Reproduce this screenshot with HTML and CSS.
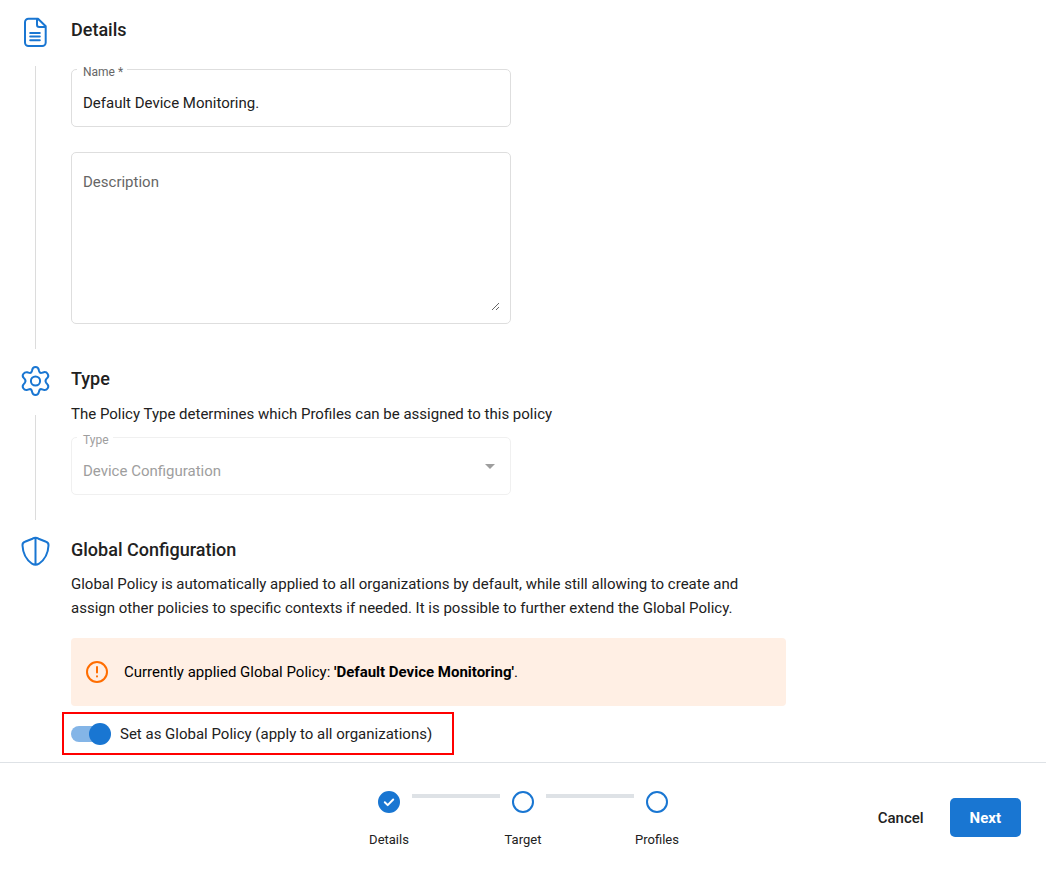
FILE: index.html
```html
<!DOCTYPE html>
<html lang="en">
<head>
<meta charset="utf-8">
<meta name="viewport" content="width=device-width, initial-scale=1">
<title>Policy details</title>
<link rel="stylesheet" href="styles.css">
</head>
<body>
<form class="page">
  <main class="content">
    <section class="section">
      <div class="rail">
        <svg class="rail-icon" viewBox="-0.5 0 36 36" aria-hidden="true">
          <path d="M11 4.700h9.500l7.700 7.600v16.200a3.500 3.500 0 0 1-3.500 3.500H11a3.500 3.500 0 0 1-3.500-3.500V8.200a3.500 3.500 0 0 1 3.500-3.500zM19.500 4.900v5.900a2.300 2.300 0 0 0 2.300 2.300h6.300M12.700 19h9.600M12.700 22.600h9.600M12.700 26.200h9.600"/>
        </svg>
        <span class="rail-line"></span>
      </div>
      <div class="section-body">
        <h2 class="title">Details</h2>
        <div class="field field-first">
          <label class="field-label" for="name">Name *</label>
          <input class="field-control" id="name" type="text" value="Default Device Monitoring." required>
        </div>
        <div class="field field-area">
          <textarea class="field-textarea" id="description" aria-label="Description" placeholder="Description"></textarea>
        </div>
      </div>
    </section>

    <section class="section">
      <div class="rail">
        <svg class="rail-icon" viewBox="-0.5 0 36 36" aria-hidden="true">
          <path d="M14.600 7.200Q15.200 4 18 4T21.400 7.200L21.800 8.700Q22.400 10.300 24.100 9.900L26.400 9.200Q28.800 8.700 30.200 11T29.800 14.900L28.700 16.200Q27.300 18 28.700 19.800L29.800 21.100Q31.600 23 30.200 25.200T26.400 26.900L24.100 26.200Q22.400 25.800 21.800 27.400L21.400 28.900Q20.800 32 18 32T14.600 28.900L14.200 27.400Q13.600 25.800 11.900 26.200L9.600 26.900Q7.200 27.400 5.800 25.200T6.200 21.100L7.300 19.800Q8.700 18 7.300 16.200L6.200 14.900Q4.400 13 5.800 11T9.600 9.200L11.900 9.900Q13.600 10.300 14.200 8.700Z"/>
          <circle cx="18" cy="18" r="4.600"/>
        </svg>
        <span class="rail-line"></span>
      </div>
      <div class="section-body">
        <h2 class="title">Type</h2>
        <p class="text">The Policy Type determines which Profiles can be assigned to this policy</p>
        <div class="field field-disabled">
          <label class="field-label" for="type">Type</label>
          <select class="field-control" id="type" disabled>
            <option>Device Configuration</option>
          </select>
          <svg class="field-arrow" viewBox="0 0 10 5" aria-hidden="true"><path d="M0 0h10L5 5z"/></svg>
        </div>
      </div>
    </section>

    <section class="section section-last">
      <div class="rail">
        <svg class="rail-icon" viewBox="-0.5 1 36 36" aria-hidden="true">
          <path d="M18 4.700Q19.500 4.700 21 5.700L28.600 8.800Q31.200 9.500 31 12.500C30.600 21 27.500 26.500 21.500 30.700Q18 33 14.500 30.700C8.500 26.500 5.400 21 5 12.500Q4.800 9.500 7.400 8.800L15 5.700Q16.500 4.700 18 4.700zM18 5v26.500"/>
        </svg>
      </div>
      <div class="section-body">
        <h2 class="title">Global Configuration</h2>
        <p class="text">Global Policy is automatically applied to all organizations by default, while still allowing to create and assign other policies to specific contexts if needed. It is possible to further extend the Global Policy.</p>
        <div class="alert" role="status">
          <svg class="alert-icon" viewBox="0 0 24 24" aria-hidden="true">
            <circle cx="12" cy="12" r="10"/>
            <path d="M12 7v5.500M12 16.200v.2"/>
          </svg>
          <span>Currently applied Global Policy: <strong>'Default Device Monitoring'</strong>.</span>
        </div>
        <label class="toggle">
          <input class="switch" type="checkbox" role="switch" checked>
          <span>Set as Global Policy (apply to all organizations)</span>
        </label>
      </div>
    </section>
  </main>

  <footer class="footer">
    <ol class="stepper">
      <li class="step">
        <svg class="step-dot step-done" viewBox="0 0 24 24" aria-hidden="true"><circle cx="12" cy="12" r="10"/><path d="M7.800 12.300l2.900 2.800 5.500-5.600"/></svg>
        <span>Details</span>
      </li>
      <li class="step-bar" aria-hidden="true"></li>
      <li class="step">
        <svg class="step-dot" viewBox="0 0 24 24" aria-hidden="true"><circle cx="12" cy="12" r="10"/></svg>
        <span>Target</span>
      </li>
      <li class="step-bar" aria-hidden="true"></li>
      <li class="step">
        <svg class="step-dot" viewBox="0 0 24 24" aria-hidden="true"><circle cx="12" cy="12" r="10"/></svg>
        <span>Profiles</span>
      </li>
    </ol>
    <div class="actions">
      <button class="button" type="button">Cancel</button>
      <button class="button button-primary" type="button">Next</button>
    </div>
  </footer>
</form>
</body>
</html>
```
FILE: styles.css
```css
* {
  box-sizing: border-box;
}

body {
  margin: 0;
  background: #fff;
  color: #212121;
  font-family: Roboto, "Liberation Sans", sans-serif;
  font-size: 15px;
  line-height: 24px;
}

.page {
  display: flex;
  flex-direction: column;
  min-height: 100vh;
}

.content {
  flex: 1;
  padding: 14px 16px 7px 17px;
}

.section {
  display: flex;
  gap: 18px;
}

.rail {
  display: flex;
  flex: none;
  flex-direction: column;
  align-items: center;
  gap: 16px;
  width: 36px;
  padding-bottom: 14px;
}

.rail-icon {
  flex: none;
  width: 36px;
  height: 36px;
  fill: none;
  stroke: #1976d2;
  stroke-width: 2;
  stroke-linecap: round;
  stroke-linejoin: round;
}

.rail-line {
  flex: 1;
  width: 1px;
  background: #dcdcdc;
}

.section-body {
  flex: 1;
  min-width: 0;
  max-width: 715px;
  padding-bottom: 39px;
}

.section-last .section-body {
  padding-bottom: 0;
}

.title {
  margin: 0;
  font-size: 18px;
  font-weight: 500;
  line-height: 32px;
}

.text {
  max-width: 700px;
  margin: 7px 0 0;
}

.section-last .text {
  margin-top: 6px;
}

.field {
  position: relative;
  max-width: 440px;
  margin-top: 11px;
  border: 1px solid #dedede;
  border-radius: 5px;
}

.field-first {
  margin-top: 23px;
}

.field-label {
  position: absolute;
  top: -6px;
  left: 5px;
  padding: 0 4px 0 6px;
  background: #fff;
  color: #666;
  font-size: 12px;
  line-height: 16px;
}

.field-control {
  display: block;
  width: 100%;
  height: 56px;
  padding: 10px 11px 0;
  border: 0;
  border-radius: 5px;
  outline: 0;
  background: none;
  appearance: none;
  color: #212121;
  font: inherit;
}

.field-area {
  margin-top: 25px;
  padding: 17px 10px 12px 11px;
}

.field-textarea {
  display: block;
  width: 100%;
  height: 141px;
  padding: 0;
  border: 0;
  outline: 0;
  resize: vertical;
  color: #212121;
  font: inherit;
}

.field-textarea::placeholder {
  color: #666;
  opacity: 1;
}

.field-disabled {
  border-color: #f0f0f0;
}

.field-disabled .field-label,
.field-disabled .field-control {
  color: #9e9e9e;
  opacity: 1;
}

.field-arrow {
  position: absolute;
  top: 26px;
  right: 15px;
  width: 10px;
  height: 5px;
  fill: #9e9e9e;
}

.alert {
  display: flex;
  align-items: center;
  gap: 15px;
  min-height: 68px;
  margin-top: 18px;
  padding: 8px 14px;
  border-radius: 4px;
  background: #ffefe4;
  color: #000;
}

.alert-icon {
  flex: none;
  width: 24px;
  height: 24px;
  fill: none;
  stroke: #ff6d00;
  stroke-width: 2;
  stroke-linecap: round;
}

.alert strong {
  font-weight: 700;
}

.toggle {
  display: inline-flex;
  align-items: center;
  gap: 9px;
  min-height: 43px;
  margin: 6px 0 0 -9px;
  padding: 0 20px 0 7px;
  border: 2px solid #f00;
  vertical-align: top;
}

.switch {
  display: flex;
  position: relative;
  flex: none;
  align-items: center;
  justify-content: flex-end;
  width: 40px;
  height: 22px;
  margin: 0;
  appearance: none;
}

.switch::before {
  content: "";
  position: absolute;
  left: 0;
  width: 36px;
  height: 16px;
  border-radius: 8px;
  background: #84b5e7;
}

.switch::after {
  content: "";
  position: relative;
  width: 22px;
  height: 22px;
  border-radius: 50%;
  background: #1976d2;
}

.footer {
  display: grid;
  grid-template-columns: 1fr auto 1fr;
  align-items: start;
  padding: 27px 25px 19px;
  border-top: 1px solid #dee2e6;
}

.stepper {
  display: flex;
  grid-column: 2;
  margin: 0;
  padding: 0 0 2px;
  list-style: none;
}

.step {
  display: flex;
  flex-direction: column;
  align-items: center;
  gap: 14px;
  width: 46px;
  font-size: 13px;
}

.step-dot {
  width: 24px;
  height: 24px;
  fill: #fff;
  stroke: #1976d2;
  stroke-width: 2;
}

.step-done {
  fill: #1976d2;
}

.step-done path {
  stroke: #fff;
  stroke-linecap: round;
  stroke-linejoin: round;
}

.step-bar {
  width: 88px;
  height: 4px;
  margin-top: 4px;
  background: #dee2e6;
}

.actions {
  display: flex;
  justify-content: flex-end;
  gap: 7px;
  margin-top: 8px;
}

.button {
  min-height: 39px;
  padding: 0 19px;
  border: 0;
  border-radius: 5px;
  background: none;
  color: #212121;
  font: inherit;
  font-weight: 500;
}

.button-primary {
  padding: 0 20px;
  background: #1976d2;
  color: #fff;
  font-weight: 700;
}
```
